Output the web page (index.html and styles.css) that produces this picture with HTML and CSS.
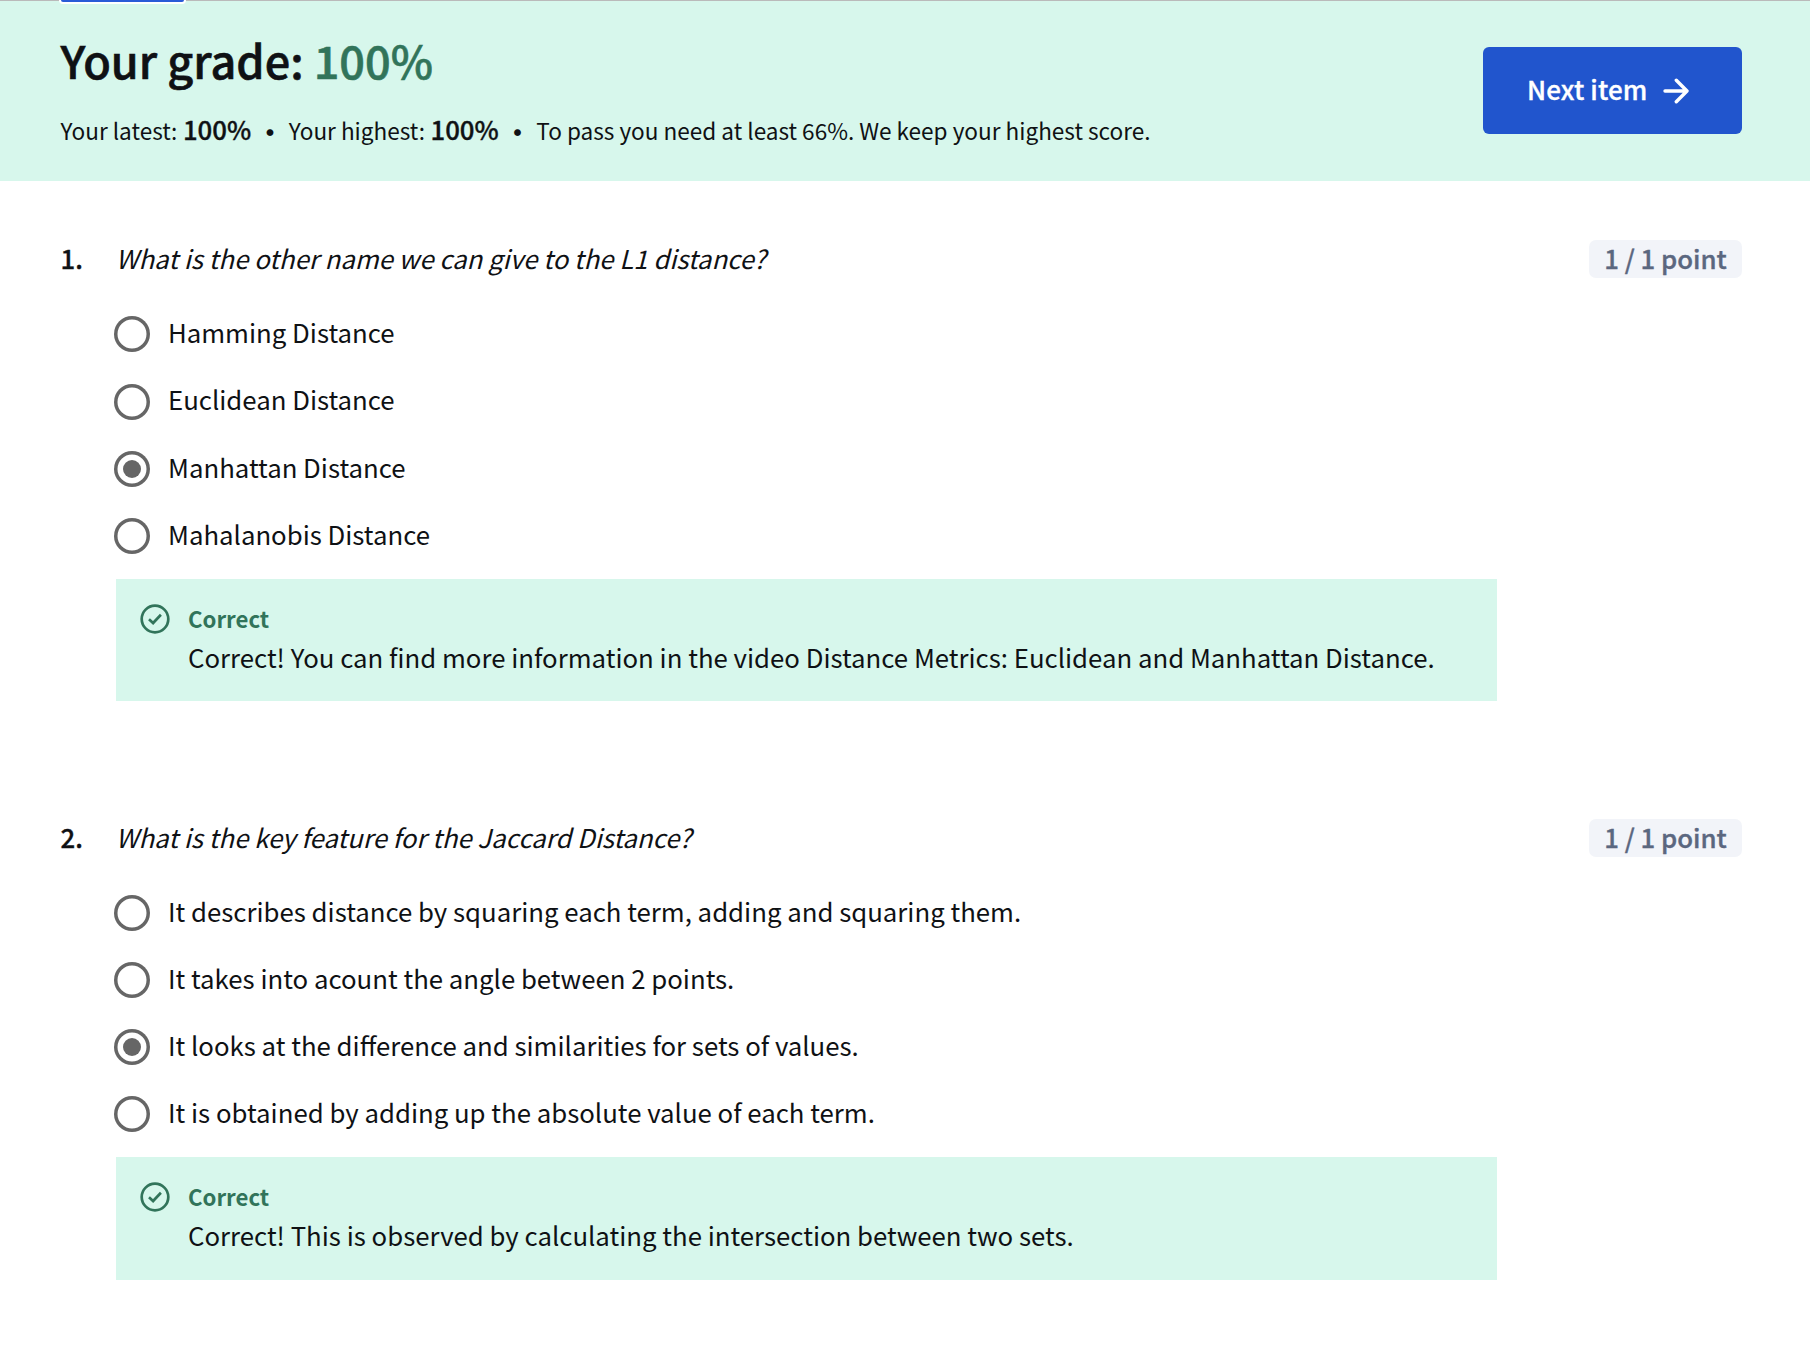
FILE: index.html
```
<!DOCTYPE html>
<html lang="en">
<head>
<meta charset="utf-8">
<title>Your grade</title>
<link rel="stylesheet" href="styles.css">
</head>
<body>
<header class="grade">
  <span class="focus-tab"></span>
  <div class="grade-info">
    <h1 class="grade-title">Your grade: <span class="score">100%</span></h1>
    <p class="grade-meta">
      <span class="latest">Your latest: <strong>100%</strong></span><span class="dot">•</span><span class="highest">Your highest: <strong>100%</strong></span><span class="dot">•</span><span class="policy">To pass you need at least 66%. We keep your highest score.</span>
    </p>
  </div>
  <button class="next" type="button">
    <span class="next-label">Next item</span>
    <svg class="arrow" viewBox="0 0 26 26"><path d="M2 13H23.5M13.3 2.2L24 13L13.3 23.8"/></svg>
  </button>
</header>
<main class="quiz">
  <section class="question">
    <div class="prompt">
      <span class="number">1.</span>
      <em class="prompt-text">What is the other name we can give to the L1 distance?</em>
      <span class="points">1 / 1 point</span>
    </div>
    <ul class="options">
      <li class="option"><span class="radio"></span><span class="label">Hamming Distance</span></li>
      <li class="option"><span class="radio"></span><span class="label">Euclidean Distance</span></li>
      <li class="option"><span class="radio checked"></span><span class="label">Manhattan Distance</span></li>
      <li class="option"><span class="radio"></span><span class="label">Mahalanobis Distance</span></li>
    </ul>
    <div class="feedback">
      <svg class="check" viewBox="0 0 30 30"><circle cx="15" cy="15" r="13.3"/><path d="M9 15.3L13.1 19L20.9 10.8"/></svg>
      <div class="feedback-body">
        <h2 class="verdict">Correct</h2>
        <p class="note">Correct! You can find more information in the video Distance Metrics: Euclidean and Manhattan Distance.</p>
      </div>
    </div>
  </section>
  <section class="question">
    <div class="prompt">
      <span class="number">2.</span>
      <em class="prompt-text">What is the key feature for the Jaccard Distance?</em>
      <span class="points">1 / 1 point</span>
    </div>
    <ul class="options">
      <li class="option"><span class="radio"></span><span class="label">It describes distance by squaring each term, adding and squaring them.</span></li>
      <li class="option"><span class="radio"></span><span class="label">It takes into acount the angle between 2 points.</span></li>
      <li class="option"><span class="radio checked"></span><span class="label">It looks at the difference and similarities for sets of values.</span></li>
      <li class="option"><span class="radio"></span><span class="label">It is obtained by adding up the absolute value of each term.</span></li>
    </ul>
    <div class="feedback">
      <svg class="check" viewBox="0 0 30 30"><circle cx="15" cy="15" r="13.3"/><path d="M9 15.3L13.1 19L20.9 10.8"/></svg>
      <div class="feedback-body">
        <h2 class="verdict">Correct</h2>
        <p class="note">Correct! This is observed by calculating the intersection between two sets.</p>
      </div>
    </div>
  </section>
</main>
</body>
</html>
```
FILE: styles.css
```
* {
  box-sizing: border-box;
  margin: 0;
  padding: 0;
}

body {
  background: #fff;
  color: #0f1114;
  font-family: "Noto Sans CJK SC", "Noto Sans", sans-serif;
  font-size: 25.78px;
  line-height: 38px;
}

/* Medium thickened slightly to give a semibold */
.grade-title,
.grade-meta strong,
.next-label,
.number,
.points {
  font-weight: 500;
  -webkit-text-stroke: 0.35px currentColor;
}

.grade {
  position: relative;
  display: flex;
  justify-content: space-between;
  align-items: flex-start;
  height: 181px;
  padding: 28px 68px 0 60.6px;
  border-top: 1px solid #bababa;
  background: #d7f7ec;
}

.focus-tab {
  position: absolute;
  top: -1px;
  left: 61px;
  width: 123px;
  height: 2px;
  border-radius: 0 0 2px 2px;
  background: #2a5bd7;
  box-shadow: 0 0 0 2px #fff;
  clip-path: inset(0 -2px -2px -2px);
}

.grade-title {
  padding-top: 1px;
  font-size: 45px;
  line-height: 60px;
  white-space: nowrap;
  -webkit-text-stroke-width: 0.6px;
}

.score,
.verdict {
  color: #31745a;
}

.grade-meta {
  display: flex;
  margin-top: 23px;
  font-size: 22.57px;
  line-height: 36px;
  white-space: nowrap;
}

.grade-meta strong {
  margin-left: 0.5px;
  font-size: 25.78px;
  line-height: 0;
}

.dot {
  width: 37.6px;
  font-size: 32px;
  text-align: center;
}

.next {
  display: flex;
  align-items: center;
  gap: 15.4px;
  width: 259px;
  height: 87px;
  margin-top: 18px;
  padding: 0 0 0 44px;
  border: 0;
  border-radius: 6px;
  background: #2155cd;
  color: #fff;
  font: inherit;
}

.next-label {
  padding-bottom: 3px;
  font-size: 26px;
  letter-spacing: 0.15px;
  white-space: nowrap;
}

.arrow {
  width: 26px;
  height: 26px;
  fill: none;
  stroke: #fff;
  stroke-width: 3.4;
  stroke-linecap: round;
  stroke-linejoin: round;
}

.quiz {
  display: grid;
  gap: 117.2px;
  padding: 59px 68px 0 60.6px;
}

.prompt {
  display: grid;
  grid-template-columns: 55.2px 1fr auto;
  height: 38px;
}

.number,
.prompt-text {
  line-height: 36.6px;
}

.points {
  width: 153px;
  border-radius: 7px;
  background: #f2f4f9;
  color: #5b677f;
  line-height: 35.6px;
  text-align: center;
}

.options {
  margin: 22.8px 0 9.2px 53.4px;
  list-style: none;
}

.option {
  display: flex;
  align-items: center;
  gap: 18px;
  height: 67.15px;
}

.label {
  padding-bottom: 4.2px;
}

.radio {
  display: grid;
  place-items: center;
  width: 36px;
  height: 36px;
  border-radius: 50%;
  box-shadow: inset 0 0 0 3.5px #666;
}

.checked::before {
  content: "";
  width: 18px;
  height: 18px;
  border-radius: 50%;
  background: #666;
}

.feedback {
  display: flex;
  gap: 18px;
  width: 1381px;
  height: 122.8px;
  margin-left: 55.4px;
  padding: 23px 24px 0;
  background: #d7f7ec;
}

.check {
  width: 30px;
  height: 30px;
  margin-top: 2px;
  fill: none;
  stroke: #31745a;
  stroke-width: 2.7;
}

.verdict {
  padding-bottom: 2px;
  font-size: 22.2px;
  font-weight: 700;
  line-height: 32px;
}

.note {
  white-space: nowrap;
  line-height: 42px;
}
```
